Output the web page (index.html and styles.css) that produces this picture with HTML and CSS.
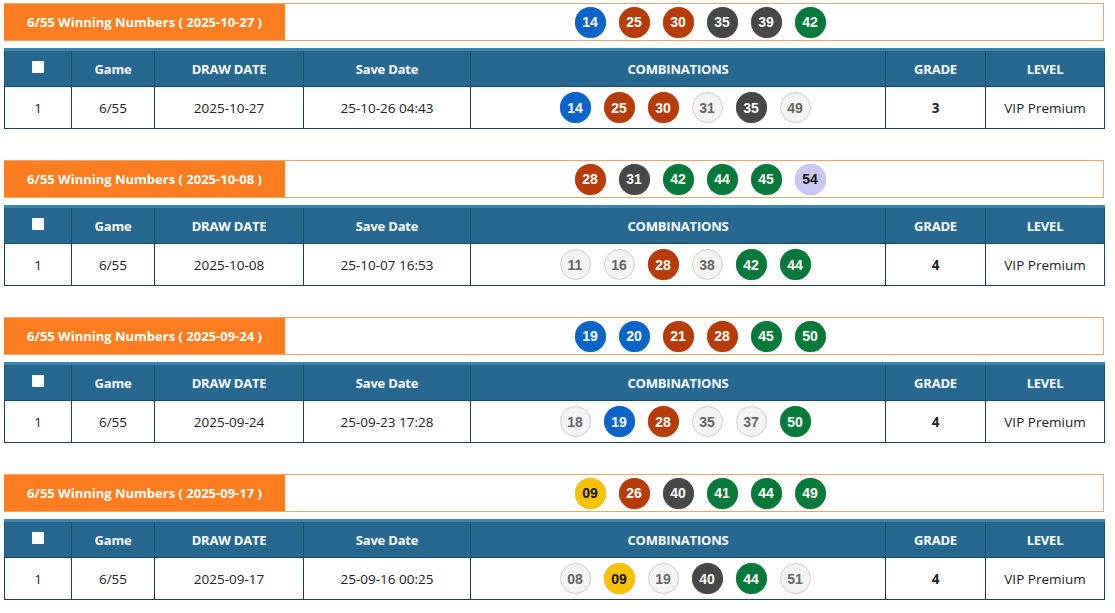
FILE: index.html
```html
<!DOCTYPE html>
<html>
<head>
<meta charset="utf-8">
<link rel="stylesheet" href="styles.css">
</head>
<body>
<div class="page">

  <section class="block">
    <div class="win">
      <div class="win-label">6/55 Winning Numbers ( 2025-10-27 )</div>
      <div class="win-balls">
        <span class="ball blue">14</span><span class="ball red">25</span><span class="ball red">30</span><span class="ball dark">35</span><span class="ball dark">39</span><span class="ball green">42</span>
      </div>
    </div>
    <table class="grid">
      <colgroup><col class="c1"><col class="c2"><col class="c3"><col class="c4"><col class="c5"><col class="c6"><col class="c7"></colgroup>
      <thead><tr><th><span class="chk"></span></th><th>Game</th><th>DRAW DATE</th><th>Save Date</th><th>COMBINATIONS</th><th>GRADE</th><th>LEVEL</th></tr></thead>
      <tbody><tr><td>1</td><td>6/55</td><td>2025-10-27</td><td>25-10-26 04:43</td>
        <td><div class="combo"><span class="ball blue">14</span><span class="ball red">25</span><span class="ball red">30</span><span class="ball light">31</span><span class="ball dark">35</span><span class="ball light">49</span></div></td>
        <td class="grade">3</td><td>VIP Premium</td></tr></tbody>
    </table>
  </section>

  <section class="block">
    <div class="win">
      <div class="win-label">6/55 Winning Numbers ( 2025-10-08 )</div>
      <div class="win-balls">
        <span class="ball red">28</span><span class="ball dark">31</span><span class="ball green">42</span><span class="ball green">44</span><span class="ball green">45</span><span class="ball violet">54</span>
      </div>
    </div>
    <table class="grid">
      <colgroup><col class="c1"><col class="c2"><col class="c3"><col class="c4"><col class="c5"><col class="c6"><col class="c7"></colgroup>
      <thead><tr><th><span class="chk"></span></th><th>Game</th><th>DRAW DATE</th><th>Save Date</th><th>COMBINATIONS</th><th>GRADE</th><th>LEVEL</th></tr></thead>
      <tbody><tr><td>1</td><td>6/55</td><td>2025-10-08</td><td>25-10-07 16:53</td>
        <td><div class="combo"><span class="ball light">11</span><span class="ball light">16</span><span class="ball red">28</span><span class="ball light">38</span><span class="ball green">42</span><span class="ball green">44</span></div></td>
        <td class="grade">4</td><td>VIP Premium</td></tr></tbody>
    </table>
  </section>

  <section class="block">
    <div class="win">
      <div class="win-label">6/55 Winning Numbers ( 2025-09-24 )</div>
      <div class="win-balls">
        <span class="ball blue">19</span><span class="ball blue">20</span><span class="ball red">21</span><span class="ball red">28</span><span class="ball green">45</span><span class="ball green">50</span>
      </div>
    </div>
    <table class="grid">
      <colgroup><col class="c1"><col class="c2"><col class="c3"><col class="c4"><col class="c5"><col class="c6"><col class="c7"></colgroup>
      <thead><tr><th><span class="chk"></span></th><th>Game</th><th>DRAW DATE</th><th>Save Date</th><th>COMBINATIONS</th><th>GRADE</th><th>LEVEL</th></tr></thead>
      <tbody><tr><td>1</td><td>6/55</td><td>2025-09-24</td><td>25-09-23 17:28</td>
        <td><div class="combo"><span class="ball light">18</span><span class="ball blue">19</span><span class="ball red">28</span><span class="ball light">35</span><span class="ball light">37</span><span class="ball green">50</span></div></td>
        <td class="grade">4</td><td>VIP Premium</td></tr></tbody>
    </table>
  </section>

  <section class="block">
    <div class="win">
      <div class="win-label">6/55 Winning Numbers ( 2025-09-17 )</div>
      <div class="win-balls">
        <span class="ball yellow">09</span><span class="ball red">26</span><span class="ball dark">40</span><span class="ball green">41</span><span class="ball green">44</span><span class="ball green">49</span>
      </div>
    </div>
    <table class="grid">
      <colgroup><col class="c1"><col class="c2"><col class="c3"><col class="c4"><col class="c5"><col class="c6"><col class="c7"></colgroup>
      <thead><tr><th><span class="chk"></span></th><th>Game</th><th>DRAW DATE</th><th>Save Date</th><th>COMBINATIONS</th><th>GRADE</th><th>LEVEL</th></tr></thead>
      <tbody><tr><td>1</td><td>6/55</td><td>2025-09-17</td><td>25-09-16 00:25</td>
        <td><div class="combo"><span class="ball light">08</span><span class="ball yellow">09</span><span class="ball light">19</span><span class="ball dark">40</span><span class="ball green">44</span><span class="ball light">51</span></div></td>
        <td class="grade">4</td><td>VIP Premium</td></tr></tbody>
    </table>
  </section>

</div>
</body>
</html>
```
FILE: styles.css
```css
* { box-sizing: border-box; }
html, body { margin: 0; padding: 0; background: #fff; }
body {
  font-family: "Open Sans", "Noto Sans", "DejaVu Sans", sans-serif;
  color: #222;
}
.page {
  width: 1100px;
  margin-left: 4px;
  padding-top: 3px;
  display: flex;
  flex-direction: column;
  gap: 31px;
}
.block { display: flex; flex-direction: column; gap: 7px; }

.win {
  display: flex;
  height: 38px;
  border: 1px solid #efa465;
  border-left: none;
}
.win-label {
  width: 281px;
  background: #fd7d20;
  color: #fff;
  font-weight: 700;
  font-size: 13px;
  display: flex;
  align-items: center;
  justify-content: center;
}
.win-balls {
  flex: 1;
  display: flex;
  align-items: center;
  justify-content: center;
  gap: 13px;
  padding-left: 12px;
}

.ball {
  width: 31px;
  height: 31px;
  border-radius: 50%;
  display: inline-flex;
  align-items: center;
  justify-content: center;
  font-family: "Liberation Sans", Arial, sans-serif;
  font-weight: 700;
  font-size: 14px;
  color: #fff;
  box-shadow: 0 0 1px rgba(0,0,0,0.35);
}
.blue { background: #0a64c9; }
.red { background: #b73c0a; }
.dark { background: #474747; }
.green { background: #077a3b; }
.yellow { background: #f7c300; color: #111; }
.violet { background: #c9c8f5; color: #111; }
.light { background: #f4f4f4; color: #666; border: 1px solid #cfcfcf; box-shadow: none; }

.grid {
  width: 100%;
  border-collapse: collapse;
  table-layout: fixed;
  border-top: 3px solid #3a86ae;
}
.c1 { width: 67px; }
.c2 { width: 83px; }
.c3 { width: 149px; }
.c4 { width: 167px; }
.c5 { width: 415px; }
.c6 { width: 100px; }
.c7 { width: 119px; }

.grid th {
  background: #266890;
  color: #fff;
  font-size: 13px;
  font-weight: 700;
  height: 37px;
  padding: 0;
  border-left: 1px solid #1d5070;
  border-right: 1px solid #1d5070;
  border-bottom: 1px solid #1b4866;
  letter-spacing: -0.2px;
}
.chk {
  display: inline-block;
  width: 12px;
  height: 12px;
  background: #fff;
  border-radius: 1px;
  vertical-align: middle;
  position: relative;
  top: -3px;
}
.grid td {
  height: 42px;
  padding: 0;
  text-align: center;
  font-size: 13.5px;
  color: #222;
  border: 1px solid #1c3f5c;
  border-top: none;
}
.grid td.grade { font-weight: 700; }
.combo {
  display: flex;
  justify-content: center;
  align-items: center;
  gap: 13px;
  padding-left: 14px;
}
```
